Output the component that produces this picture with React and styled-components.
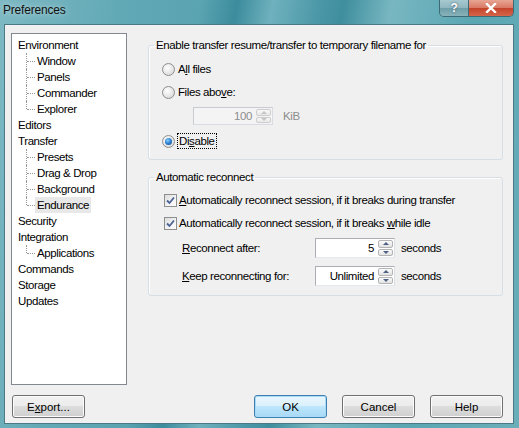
import React from "react";
import styled, { createGlobalStyle } from "styled-components";

const GlobalStyle = createGlobalStyle`
  html, body { margin: 0; padding: 0; }
  body {
    font-family: "Liberation Sans", Arial, sans-serif;
    font-size: 11.5px;
    letter-spacing: -0.4px;
    color: #000;
  }
  u { text-decoration-thickness: 1px; text-underline-offset: 1px; }
`;

const treeItems = [
  { label: "Environment", level: 0 },
  { label: "Window", level: 1 },
  { label: "Panels", level: 1 },
  { label: "Commander", level: 1 },
  { label: "Explorer", level: 1, last: true },
  { label: "Editors", level: 0 },
  { label: "Transfer", level: 0 },
  { label: "Presets", level: 1 },
  { label: "Drag & Drop", level: 1 },
  { label: "Background", level: 1 },
  { label: "Endurance", level: 1, last: true, selected: true },
  { label: "Security", level: 0 },
  { label: "Integration", level: 0 },
  { label: "Applications", level: 1, last: true },
  { label: "Commands", level: 0 },
  { label: "Storage", level: 0 },
  { label: "Updates", level: 0 },
];

export default function App() {
  return (
    <>
      <GlobalStyle />
      <Window>
        <TitleBar>
          <Title>Preferences</Title>
          <CaptionButtons>
            <HelpCaption>?</HelpCaption>
            <CloseCaption>
              <svg width="12" height="10" viewBox="0 0 12 10">
                <path d="M2 1 L10 9 M10 1 L2 9" stroke="#fff" strokeWidth="2.4" strokeLinecap="square" />
              </svg>
            </CloseCaption>
          </CaptionButtons>
        </TitleBar>
        <Client>
          <Main>
            <Tree>
              {treeItems.map((item) => (
                <TreeRow key={item.label} $level={item.level} $last={item.last}>
                  <TreeLabel $selected={item.selected}>{item.label}</TreeLabel>
                </TreeRow>
              ))}
            </Tree>
            <Settings>
              <GroupBox>
                <Legend>Enable transfer resume/transfer to temporary filename for</Legend>
                <GroupBody $left={13} $bottom={10}>
                  <OptionRow $top={9}>
                    <Radio />
                    <OptionText>A<u>l</u>l files</OptionText>
                  </OptionRow>
                  <OptionRow $top={7}>
                    <Radio />
                    <OptionText>Files abo<u>v</u>e:</OptionText>
                  </OptionRow>
                  <SizeRow>
                    <SpinBox $disabled $width={80} $height={18}>
                      <SpinValue>100</SpinValue>
                      <SpinArrows $disabled>
                        <ArrowButton>
                          <Triangle $up $disabled />
                        </ArrowButton>
                        <ArrowButton>
                          <Triangle $disabled />
                        </ArrowButton>
                      </SpinArrows>
                    </SpinBox>
                    <Unit $disabled>KiB</Unit>
                  </SizeRow>
                  <OptionRow $top={8}>
                    <Radio $checked />
                    <FocusText>
                      Di<u>s</u>able
                    </FocusText>
                  </OptionRow>
                </GroupBody>
              </GroupBox>

              <GroupBox $second>
                <Legend>Automatic reconnect</Legend>
                <GroupBody $left={15} $bottom={9}>
                  <OptionRow $top={8} $check>
                    <Checkbox>
                      <CheckMark />
                    </Checkbox>
                    <OptionText>
                      <u>A</u>utomatically reconnect session, if it breaks during transfer
                    </OptionText>
                  </OptionRow>
                  <OptionRow $top={7} $check>
                    <Checkbox>
                      <CheckMark />
                    </Checkbox>
                    <OptionText>
                      Automatically reconnect session, if it breaks <u>w</u>hile idle
                    </OptionText>
                  </OptionRow>
                  <FieldRow $top={7}>
                    <FieldLabel>
                      <u>R</u>econnect after:
                    </FieldLabel>
                    <SpinBox $width={80} $height={20}>
                      <SpinValue>5</SpinValue>
                      <SpinArrows>
                        <ArrowButton>
                          <Triangle $up />
                        </ArrowButton>
                        <ArrowButton>
                          <Triangle />
                        </ArrowButton>
                      </SpinArrows>
                    </SpinBox>
                    <Unit>seconds</Unit>
                  </FieldRow>
                  <FieldRow $top={8}>
                    <FieldLabel>
                      <u>K</u>eep reconnecting for:
                    </FieldLabel>
                    <SpinBox $width={80} $height={20}>
                      <SpinValue>Unlimited</SpinValue>
                      <SpinArrows>
                        <ArrowButton>
                          <Triangle $up />
                        </ArrowButton>
                        <ArrowButton>
                          <Triangle />
                        </ArrowButton>
                      </SpinArrows>
                    </SpinBox>
                    <Unit>seconds</Unit>
                  </FieldRow>
                </GroupBody>
              </GroupBox>
            </Settings>
          </Main>
          <Footer>
            <Button>
              E<u>x</u>port...
            </Button>
            <Actions>
              <Button $default>OK</Button>
              <Button>Cancel</Button>
              <Button>Help</Button>
            </Actions>
          </Footer>
        </Client>
      </Window>
    </>
  );
}

function CheckMark() {
  return (
    <svg width="9" height="9" viewBox="0 0 9 9">
      <path d="M1 4.5 L3.5 7 L8 1.5" fill="none" stroke="#4a6394" strokeWidth="1.8" />
    </svg>
  );
}

const Window = styled.div`
  width: 519px;
  height: 428px;
  display: flex;
  flex-direction: column;
  overflow: hidden;
  background: linear-gradient(
    100deg,
    #7db9c3 0%,
    #62a9b6 20%,
    #5aa3b1 34%,
    #3c8c9d 40%,
    #6fb1bd 46%,
    #4b97a7 54%,
    #3f8e9e 58%,
    #78b7c1 66%,
    #5aa6b3 80%,
    #6aaeb9 100%
  );
`;

const TitleBar = styled.div`
  height: 24px;
  display: flex;
  justify-content: space-between;
  align-items: flex-start;
`;

const Title = styled.div`
  margin: 3px 0 0 3px;
  font-size: 12px;
  letter-spacing: -0.2px;
  line-height: 14px;
  color: #111;
  text-shadow: 0 0 6px rgba(255, 255, 255, 0.6);
`;

const CaptionButtons = styled.div`
  display: flex;
  margin-right: 5px;
  border: 1px solid #3e6a76;
  border-top: none;
  border-radius: 0 0 5px 5px;
  overflow: hidden;
  height: 16px;
`;

const HelpCaption = styled.div`
  width: 28px;
  display: flex;
  align-items: center;
  justify-content: center;
  color: #fff;
  font-weight: bold;
  font-size: 12px;
  border-right: 1px solid #3e6a76;
  background: linear-gradient(#a7c9d0 0%, #8fb6bf 50%, #6e9ea8 51%, #88b2ba 100%);
  text-shadow: 0 0 2px #345;
`;

const CloseCaption = styled.div`
  width: 44px;
  display: flex;
  align-items: center;
  justify-content: center;
  background: linear-gradient(#e8a493 0%, #d87a66 48%, #c4442b 52%, #d5654a 100%);
`;

const Client = styled.div`
  flex: 1;
  margin: 0 5px 4px 4px;
  border: 1px solid #4b7a86;
  background: #f0f0f0;
  display: flex;
  flex-direction: column;
  padding: 8px 10px 5px 6px;
  min-height: 0;
`;

const Main = styled.div`
  flex: 1;
  display: flex;
  min-height: 0;
`;

const Tree = styled.div`
  width: 116px;
  box-sizing: border-box;
  border: 1px solid #828790;
  background: #fff;
  padding-top: 3px;
`;

const TreeRow = styled.div`
  position: relative;
  height: 16px;
  line-height: 16px;
  padding-left: ${(p) => (p.$level ? 25 : 6)}px;
  white-space: nowrap;

  ${(p) =>
    p.$level
      ? `
  &::before {
    content: "";
    position: absolute;
    left: 14px;
    top: 0;
    height: ${p.$last ? 8 : 16}px;
    border-left: 1px dotted #999;
  }
  &::after {
    content: "";
    position: absolute;
    left: 15px;
    top: 8px;
    width: 8px;
    border-top: 1px dotted #999;
  }`
      : ""}
`;

const TreeLabel = styled.span`
  display: inline-block;
  padding: 0 2px;
  margin-left: -2px;
  background: ${(p) => (p.$selected ? "#e8e8e8" : "transparent")};
`;

const Settings = styled.div`
  flex: 1;
  margin-left: 21px;
  padding-top: 5px;
  display: flex;
  flex-direction: column;
`;

const GroupBox = styled.fieldset`
  margin: ${(p) => (p.$second ? "10px 0 0" : "0")};
  padding: 0;
  border: 1px solid #d5dfe5;
  border-radius: 3px;
  box-shadow: inset 1px 1px 0 #fff;
  min-width: 0;
`;

const Legend = styled.legend`
  margin-left: 5px;
  padding: 0 2px;
  line-height: 14px;
  color: #000;
`;

const GroupBody = styled.div`
  padding: 0 0 ${(p) => p.$bottom}px ${(p) => p.$left}px;
`;

const OptionRow = styled.div`
  margin-top: ${(p) => p.$top}px;
  height: 16px;
  display: flex;
  align-items: center;
  gap: ${(p) => (p.$check ? 2 : 3)}px;
`;

const OptionText = styled.span`
  line-height: 16px;
  white-space: nowrap;
`;

const FocusText = styled.span`
  line-height: 14px;
  border: 1px dotted #000;
  padding: 0 1px;
  margin-left: -1px;
`;

const Radio = styled.span`
  width: 13px;
  height: 13px;
  box-sizing: border-box;
  border-radius: 50%;
  border: 1px solid #8e8f8f;
  background: radial-gradient(circle at 40% 35%, #ffffff 0%, #e6e6e6 55%, #cfcfcf 100%);
  display: flex;
  align-items: center;
  justify-content: center;

  &::after {
    content: "";
    display: ${(p) => (p.$checked ? "block" : "none")};
    width: 7px;
    height: 7px;
    border-radius: 50%;
    background: radial-gradient(circle at 40% 35%, #8fd0ff 0%, #2e86d6 45%, #0b3f82 100%);
  }
`;

const Checkbox = styled.span`
  width: 13px;
  height: 13px;
  box-sizing: border-box;
  border: 1px solid #8e8f8f;
  background: linear-gradient(135deg, #dcdcdc 0%, #f4f4f4 60%, #ffffff 100%);
  display: flex;
  align-items: center;
  justify-content: center;
`;

const SizeRow = styled.div`
  margin: 7px 0 0 31px;
  display: flex;
  align-items: center;
  gap: 10px;
`;

const FieldRow = styled.div`
  margin: ${(p) => p.$top}px 0 0 18px;
  display: flex;
  align-items: center;
`;

const FieldLabel = styled.span`
  width: 133px;
  white-space: nowrap;
`;

const SpinBox = styled.div`
  width: ${(p) => p.$width}px;
  height: ${(p) => p.$height}px;
  box-sizing: border-box;
  border: 1px solid ${(p) => (p.$disabled ? "#c8ccd1" : "#abadb3")};
  border-bottom-color: ${(p) => (p.$disabled ? "#d8dce0" : "#e3e9ef")};
  border-right-color: ${(p) => (p.$disabled ? "#d8dce0" : "#dbdfe6")};
  background: ${(p) => (p.$disabled ? "#f4f4f4" : "#fff")};
  color: ${(p) => (p.$disabled ? "#8d8d8d" : "#000")};
  display: flex;
  align-items: stretch;
`;

const SpinValue = styled.span`
  flex: 1;
  padding-right: 4px;
  display: flex;
  align-items: center;
  justify-content: flex-end;
`;

const SpinArrows = styled.div`
  width: 15px;
  display: flex;
  flex-direction: column;
  gap: 1px;
  padding: 1px 1px 1px 0;
  opacity: ${(p) => (p.$disabled ? 0.6 : 1)};
`;

const ArrowButton = styled.div`
  flex: 1;
  border: 1px solid #b4b4b4;
  border-radius: 2px;
  background: linear-gradient(#fbfbfb, #e2e2e2);
  display: flex;
  align-items: center;
  justify-content: center;
`;

const Triangle = styled.span`
  width: 0;
  height: 0;
  border-left: 3px solid transparent;
  border-right: 3px solid transparent;
  ${(p) =>
    p.$up
      ? `border-bottom: 3px solid ${p.$disabled ? "#a6a6a6" : "#4d6185"};`
      : `border-top: 3px solid ${p.$disabled ? "#a6a6a6" : "#4d6185"};`}
`;

const Unit = styled.span`
  margin-left: ${(p) => (p.$disabled ? 0 : 6)}px;
  color: ${(p) => (p.$disabled ? "#8d8d8d" : "#000")};
`;

const Footer = styled.div`
  margin-top: 10px;
  padding-left: 1px;
  display: flex;
  justify-content: space-between;
`;

const Actions = styled.div`
  display: flex;
  gap: 15px;
`;

const Button = styled.button`
  width: 73px;
  height: 23px;
  box-sizing: border-box;
  font: inherit;
  color: #000;
  padding: 0;
  border-radius: 3px;
  border: 1px solid ${(p) => (p.$default ? "#3c7fb1" : "#707070")};
  background: ${(p) =>
    p.$default
      ? "linear-gradient(#eaf6fd 0%, #d9f0fc 49%, #bee6fd 50%, #a7d9f5 100%)"
      : "linear-gradient(#f2f2f2 0%, #ebebeb 49%, #dddddd 50%, #cfcfcf 100%)"};
  box-shadow: inset 0 0 0 1px ${(p) => (p.$default ? "#a9dbf6" : "#fcfcfc")};
`;
